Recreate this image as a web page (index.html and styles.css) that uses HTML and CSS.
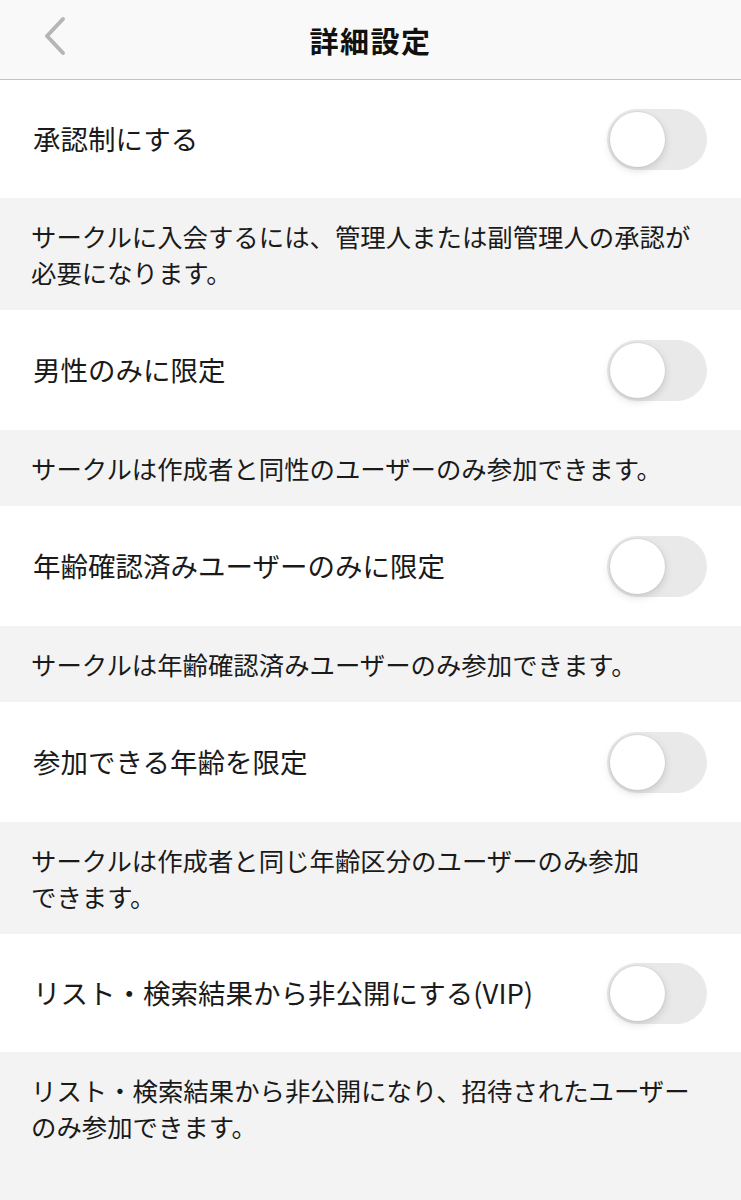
FILE: index.html
```html
<!DOCTYPE html>
<html lang="ja">
<head>
  <meta charset="UTF-8" />
  <title>詳細設定</title>
  <link rel="stylesheet" href="styles.css">
</head>
<body>
  <div id="header">
    <a class="back-btn" href="#">
      <svg width="30" height="40" viewBox="0 0 30 40">
        <polyline points="23,3 7,20 23,37" fill="none" stroke="#b5b5b5" stroke-width="4" stroke-linecap="round" stroke-linejoin="round" />
      </svg>
    </a>
    <h1>詳細設定</h1>
  </div>

  <div class="setting-row short">
    <span class="setting-label">承認制にする</span>
    <div class="toggle"><div class="knob"></div></div>
  </div>
  <div class="setting-desc">サークルに入会するには、管理人または副管理人の承認が<br>必要になります。</div>

  <div class="setting-row">
    <span class="setting-label">男性のみに限定</span>
    <div class="toggle"><div class="knob"></div></div>
  </div>
  <div class="setting-desc">サークルは作成者と同性のユーザーのみ参加できます。</div>

  <div class="setting-row">
    <span class="setting-label">年齢確認済みユーザーのみに限定</span>
    <div class="toggle"><div class="knob"></div></div>
  </div>
  <div class="setting-desc">サークルは年齢確認済みユーザーのみ参加できます。</div>

  <div class="setting-row">
    <span class="setting-label">参加できる年齢を限定</span>
    <div class="toggle"><div class="knob"></div></div>
  </div>
  <div class="setting-desc">サークルは作成者と同じ年齢区分のユーザーのみ参加<br>できます。</div>

  <div class="setting-row short">
    <span class="setting-label">リスト・検索結果から非公開にする(VIP)</span>
    <div class="toggle"><div class="knob"></div></div>
  </div>
  <div class="setting-desc">リスト・検索結果から非公開になり、招待されたユーザー<br>のみ参加できます。</div>
</body>
</html>
```

FILE: styles.css
```css
body {
  margin: 0;
  font-family: "Noto Sans CJK JP", "Noto Sans", sans-serif;
  background: #f3f3f3;
  color: #1a1a1a;
}

#header {
  position: relative;
  height: 79px;
  background: #f9f9f9;
  border-bottom: 1px solid #c4c4c4;
  display: flex;
  align-items: center;
  justify-content: center;
}

#header h1 {
  margin: 0;
  font-size: 29px;
  font-weight: bold;
  color: #111;
  letter-spacing: 1.5px;
}

.back-btn {
  position: absolute;
  left: 40px;
  top: 16px;
  display: block;
  width: 30px;
  height: 40px;
}

.setting-row {
  height: 120px;
  background: #fff;
  display: flex;
  align-items: center;
  justify-content: space-between;
  padding: 0 34px 0 33px;
}

.setting-row.short {
  height: 118px;
}

.setting-label {
  font-size: 27.5px;
  line-height: 36px;
  margin-top: -2px;
}

.toggle {
  position: relative;
  width: 100px;
  height: 61px;
  border-radius: 31px;
  background: #e9e9ea;
}

.toggle .knob {
  position: absolute;
  top: 3px;
  left: 3px;
  width: 55px;
  height: 55px;
  border-radius: 50%;
  background: #fff;
  box-shadow: 0 3px 8px rgba(0, 0, 0, 0.15), 0 0 0 1px rgba(0, 0, 0, 0.04);
}

.setting-desc {
  padding: 20px 20px 20px 31px;
  font-size: 25.4px;
  line-height: 36px;
  background: #f3f3f3;
  white-space: nowrap;
}
```
